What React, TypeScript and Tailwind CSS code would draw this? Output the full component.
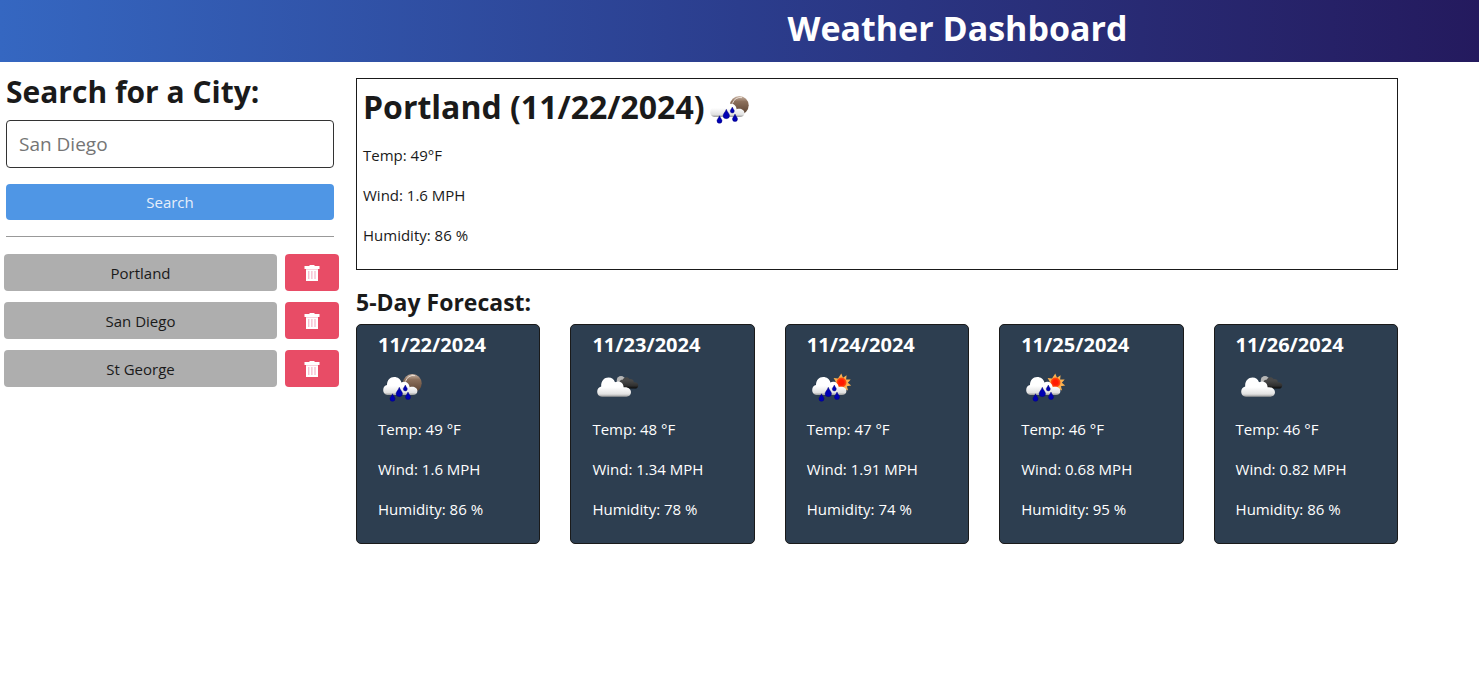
import { useId, useState } from "react";

type Sky = "night-rain" | "day-rain" | "broken-clouds";

interface Forecast {
  date: string;
  sky: Sky;
  temp: string;
  wind: string;
  humidity: string;
}

const forecast: Forecast[] = [
  { date: "11/22/2024", sky: "night-rain", temp: "49", wind: "1.6", humidity: "86" },
  { date: "11/23/2024", sky: "broken-clouds", temp: "48", wind: "1.34", humidity: "78" },
  { date: "11/24/2024", sky: "day-rain", temp: "47", wind: "1.91", humidity: "74" },
  { date: "11/25/2024", sky: "day-rain", temp: "46", wind: "0.68", humidity: "95" },
  { date: "11/26/2024", sky: "broken-clouds", temp: "46", wind: "0.82", humidity: "86" },
];

const sunRays = "M34.3 10.5l1.7 4.2 3.6-2.4-.5 4.3 4.6-.2-2.9 3.4 3.4 2.6-4.3.9 1.2 4.2-4-1.7-2.8 3.6-1.8-4-4.2 1.4 1-4.3-4.3-1.5 3.8-2.3-2.2-3.8 4.4.6z";

function Drop({ x, y, h }: { x: number; y: number; h: number }) {
  const w = h * 0.34;
  return (
    <path
      fill="#0000b4"
      stroke="#000070"
      strokeWidth="0.4"
      d={`M${x} ${y - h / 2}C${x + w * 0.3} ${y - h * 0.2} ${x + w} ${y} ${x + w} ${y + h * 0.15}A${w} ${w} 0 0 1 ${x - w} ${y + h * 0.15}C${x - w} ${y} ${x - w * 0.3} ${y - h * 0.2} ${x} ${y - h / 2}Z`}
    />
  );
}

function SkyIcon({ sky }: { sky: Sky }) {
  const id = useId();
  const label = { "night-rain": "Rain", "day-rain": "Rain", "broken-clouds": "Broken clouds" }[sky];
  return (
    <svg viewBox="0 0 50 50" className="size-[50px] shrink-0" role="img" aria-label={label}>
      <defs>
        <linearGradient id={`${id}c`} x1="0" y1="0" x2="0" y2="1">
          <stop offset="0.5" stopColor="#ffffff" />
          <stop offset="0.86" stopColor="#e2e2e2" />
          <stop offset="1" stopColor="#9a9a9a" />
        </linearGradient>
        <linearGradient id={`${id}m`} x1="0" y1="0" x2="0" y2="1">
          <stop offset="0" stopColor="#cdb8a8" />
          <stop offset="0.3" stopColor="#8c705c" />
          <stop offset="1" stopColor="#58402f" />
        </linearGradient>
        <linearGradient id={`${id}d`} x1="0" y1="0" x2="0" y2="1">
          <stop offset="0.3" stopColor="#484848" />
          <stop offset="0.75" stopColor="#303030" />
          <stop offset="1" stopColor="#080808" />
        </linearGradient>
        <radialGradient id={`${id}s`}>
          <stop offset="0.5" stopColor="#ff1a00" />
          <stop offset="1" stopColor="#ff5a10" />
        </radialGradient>
      </defs>
      {sky === "broken-clouds" ? (
        <>
          <circle cx="29" cy="17.3" r="4.2" fill="#b5b5b5" />
          <path
            fill={`url(#${id}d)`}
            d="M28 21.5C26.4 18.6 28.6 16.2 30.6 16.8C32 13.6 36 13.4 37.6 16.2C39.8 15.4 42 17 41.8 19.4C44.6 19 46.6 20.8 46.3 22.8C46 25 44.5 25.6 43 25.6H31Z"
          />
          <path
            fill={`url(#${id}c)`}
            d="M10 33.7C7 33.7 5.2 31.5 5.2 28.6C5.2 26 6.8 24 9.2 23.5C8.8 18 12.2 14.6 16.5 14.6C19.8 14.6 22 16.5 23 19.2C27 17.4 31.6 19.6 31.6 24.3C35.8 23.6 39 26 39 29.3C39 32 37 33.7 34.4 33.7Z"
          />
        </>
      ) : (
        <>
          {sky === "night-rain" ? (
            <>
              <circle cx="34.3" cy="20.3" r="9.4" fill={`url(#${id}m)`} />
              <path d="M27.5 18.5A8 8 0 0 1 37 12.6" fill="none" stroke="#eadfd6" strokeWidth="1" />
            </>
          ) : (
            <>
              <path d={sunRays} fill="#f9b050" />
              <circle cx="34.5" cy="19.5" r="5" fill={`url(#${id}s)`} />
            </>
          )}
          <path
            fill={`url(#${id}c)`}
            d="M10 32C7 32 5.2 29.8 5.2 27C5.2 24.2 7 22.4 9 22C9 17 12 14 16.2 14C19.8 14 22.6 16.2 23.4 19.4C26.5 17.4 31.4 19.4 31.6 24.2C35.8 23 39.4 25 39.4 28C39.4 30.6 37.5 32 35 32Z"
          />
          <Drop x={14.5} y={34.5} h={7.5} />
          <Drop x={21.3} y={29} h={9.5} />
          <Drop x={27.3} y={25} h={6} />
          <Drop x={30} y={32.8} h={7.5} />
        </>
      )}
    </svg>
  );
}

function TrashIcon() {
  return (
    <svg viewBox="0 0 16 18" className="h-[18px] w-4" aria-hidden="true">
      <path fill="#fff" d="M5.5 1h5v1H15.5v3H.5V2h5zM2 5h12v12H2z" />
      <path fill="#f3a5bd" d="M4.3 7h1v8h-1zM7.4 7h1v8h-1zM10.5 7h1v8h-1zM2 5h12v.5H2z" />
    </svg>
  );
}

export default function App() {
  const [cities, setCities] = useState(["Portland", "San Diego", "St George"]);
  const [query, setQuery] = useState("");

  return (
    <div className="bg-white font-['Open_Sans','Noto_Sans',sans-serif] text-[15px] leading-6 text-[#1a1a1a]">
      <header className="bg-linear-to-r from-[#3567c1] via-[#2b3d8d] to-[#241a5e] pt-1 pb-[10px] pl-[436px]">
        <h1 className="text-center text-[34px] leading-[48px] font-bold text-white">Weather Dashboard</h1>
      </header>

      <div className="flex gap-[17px] pr-[81px]">
        <aside className="w-[339px] shrink-0 pt-2">
          <form className="pr-[5px] pl-[6px]" onSubmit={(e) => e.preventDefault()}>
            <label htmlFor="city" className="block text-[30px] leading-[44px] font-bold">
              Search for a City:
            </label>
            <input
              id="city"
              value={query}
              onChange={(e) => setQuery(e.target.value)}
              placeholder="San Diego"
              className="mt-[6px] block h-12 w-full rounded border border-[#333] px-3 text-[19px] placeholder:text-[#757575]"
            />
            <button type="submit" className="mt-4 block h-9 w-full rounded bg-[#4f96e5] text-[#e6eefa]">
              Search
            </button>
            <hr className="mt-4 border-[#999]" />
          </form>
          <ul className="mt-[17px] flex flex-col gap-[11px] pl-1">
            {cities.map((city) => (
              <li key={city} className="flex gap-2">
                <button type="button" className="h-[37px] flex-1 rounded bg-[#aeaeae]">
                  {city}
                </button>
                <button
                  type="button"
                  aria-label={`Delete ${city}`}
                  onClick={() => setCities(cities.filter((c) => c !== city))}
                  className="flex h-[37px] w-[54px] items-center justify-center rounded bg-[#e84c66]"
                >
                  <TrashIcon />
                </button>
              </li>
            ))}
          </ul>
        </aside>

        <main className="min-w-0 flex-1 pt-4">
          <section className="border border-[#1a1a1a] px-[6px] pt-[6px] pb-[22px]">
            <h2 className="flex h-[50px] items-start text-[32px] leading-[44px] font-bold">
              Portland (11/22/2024)
              <SkyIcon sky="night-rain" />
            </h2>
            <div className="mt-2 flex flex-col gap-4">
              <p>Temp: 49°F</p>
              <p>Wind: 1.6 MPH</p>
              <p>Humidity: 86 %</p>
            </div>
          </section>

          <h3 className="mt-[14px] text-[23px] leading-9 font-bold">5-Day Forecast:</h3>
          <div className="mt-1 grid grid-cols-5 gap-[30px]">
            {forecast.map((day) => (
              <article key={day.date} className="rounded-[5px] border border-[#1a1a1a] bg-[#2d3e50] px-[21px] pt-[6px] pb-[22px] text-white">
                <h4 className="text-[20px] leading-7 font-bold">{day.date}</h4>
                <div className="mt-1">
                  <SkyIcon sky={day.sky} />
                </div>
                <div className="mt-1 flex flex-col gap-4">
                  <p>Temp: {day.temp} °F</p>
                  <p>Wind: {day.wind} MPH</p>
                  <p>Humidity: {day.humidity} %</p>
                </div>
              </article>
            ))}
          </div>
        </main>
      </div>
    </div>
  );
}
